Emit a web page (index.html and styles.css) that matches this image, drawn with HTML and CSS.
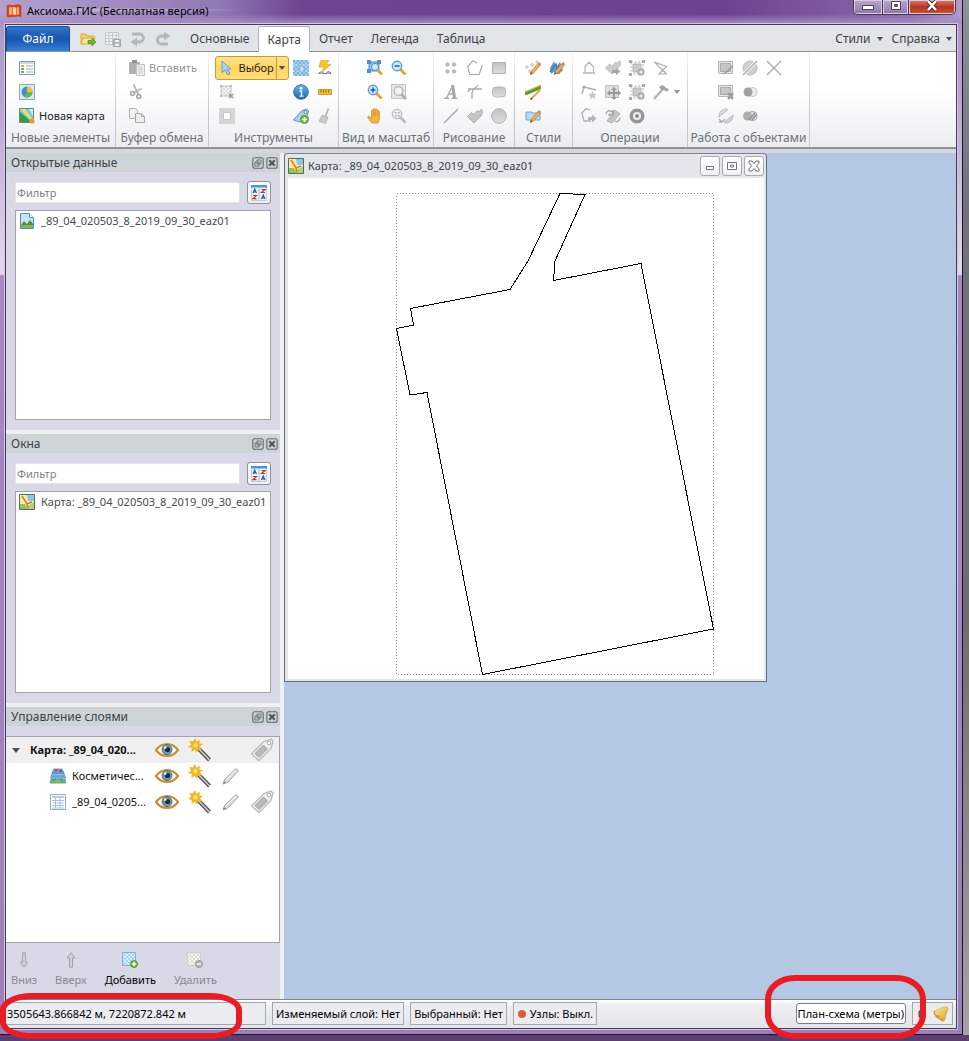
FILE: index.html
```html
<!DOCTYPE html>
<html lang="ru">
<head>
<meta charset="utf-8">
<meta name="viewport" content="width=device-width, initial-scale=1">
<title>Аксиома.ГИС (Бесплатная версия)</title>
<link rel="stylesheet" href="styles.css">
</head>
<body>
<svg class="sprite" aria-hidden="true">
  <defs>
    <linearGradient id="gGrey" x1="0" y1="0" x2="0" y2="1"><stop offset="0" stop-color="#c2c2c2"/><stop offset="1" stop-color="#dedede"/></linearGradient>
    <linearGradient id="gBlue" x1="0" y1="0" x2="0" y2="1"><stop offset="0" stop-color="#6fb4ea"/><stop offset="1" stop-color="#1c62b4"/></linearGradient>
    <linearGradient id="gGold" x1="0" y1="0" x2="1" y2="1"><stop offset="0" stop-color="#fff0a8"/><stop offset="1" stop-color="#d99a1c"/></linearGradient>
    <pattern id="pCheck" width="4" height="4" patternUnits="userSpaceOnUse"><rect width="4" height="4" fill="#d6efff"/><path d="M0 0h2v2H0zM2 2h2v2H2z" fill="#a4d4f4"/></pattern>
    <pattern id="pCheckGrey" width="4" height="4" patternUnits="userSpaceOnUse"><rect width="4" height="4" fill="#f4f4f4"/><path d="M0 0h2v2H0zM2 2h2v2H2z" fill="#dcdcdc"/></pattern>
    <pattern id="pSel" width="4" height="4" patternUnits="userSpaceOnUse"><rect width="4" height="4" fill="#a9d0ee"/><path d="M0 0h2v2H0zM2 2h2v2H2z" fill="#7db2dc"/></pattern>
  </defs>
  <symbol id="app" viewBox="0 0 16 16"><path d="M1 2.500c3-1.500 4 .5 7 0s4-1.500 7 0v11c-3-1.500-4 .5-7 0s-4 1.500-7 0z" fill="#d9481f" stroke="#b83a17" stroke-width=".6"/><path d="M3 4.500l3-.5v7.500l-3 .5zM6.500 4l3.500.5V12l-3.500-.5zM10.500 4.500L13 4v7.500l-2.500.5z" fill="#f3a676"/><path d="M7 4.500l3 .4v6.500l-3-.4z" fill="#fbd3b0"/></symbol>
  <symbol id="open" viewBox="0 0 16 16"><path d="M1 13V3h5l1 2h7v3" fill="#f5d372" stroke="#d9a93c"/><path d="M1 13l2-6h12l-2 6z" fill="#fbe59a" stroke="#d9a93c"/><path d="M8 9.500h4V7l4 4-4 4v-2.500H8z" fill="#6cb52d" stroke="#4d8f1b" stroke-width=".7"/></symbol>
  <symbol id="saveTable" viewBox="0 0 16 16"><path d="M.5 1.500h13v12H.5zM.5 4.500h13M.5 7.500h13M.5 10.500h13M4 1.500v12M7.500 1.500v12M11 1.500v12" fill="#f3f3f3" stroke="#c6c6c6"/><path d="M8.500 8.500h7v7h-7z" fill="#b7b9bb" stroke="#a5a5a5"/><path d="M10 9h4v2h-4zM10 13h4v2h-4z" fill="#f1f1f1"/></symbol>
  <symbol id="undo" viewBox="0 0 16 16"><path d="M2 3h7.500a4 4 0 0 1 0 8H5" fill="none" stroke="#b4b6b8" stroke-width="2.800"/><path d="M7 6.500v9L.5 11z" fill="#b4b6b8"/></symbol>
  <symbol id="redo" viewBox="0 0 16 16"><path d="M11 5H6.500a4 4 0 0 0 0 8H13" fill="none" stroke="#b4b6b8" stroke-width="2.800"/><path d="M9 .5v9L15.500 5z" fill="#b4b6b8"/></symbol>
  <symbol id="legend" viewBox="0 0 16 16"><path d="M.5 1.500h15v13H.5z" fill="#fff" stroke="#7f9bb5"/><path d="M1 2h14v2H1z" fill="#c4d9ea"/><path d="M2 5h3v2H2z" fill="#e9a53a"/><path d="M2 8h3v2H2z" fill="#5f9fd6"/><path d="M2 11h3v2H2z" fill="#73b04a"/><path d="M7 6h7M7 9h7M7 12h7" stroke="#9aa9b6"/></symbol>
  <symbol id="pie" viewBox="0 0 16 16"><path d="M.5.500h15v15H.5z" fill="#dfe8f0" stroke="#8fa6b8"/><circle cx="8" cy="8" r="5.500" fill="#3f8fd2"/><path d="M8 8V2.500A5.500 5.500 0 0 1 13.500 8z" fill="#f0c23c"/><path d="M8 8h5.500a5.500 5.500 0 0 1-8 5z" fill="#70b548"/></symbol>
  <symbol id="newmap" viewBox="0 0 16 16"><path d="M.5.500h14v14H.5z" fill="#7cc7ea" stroke="#5a8a8a"/><path d="M1 4l12 10H1z" fill="#36a041"/><path d="M1 1h5L14 12v2z" fill="#f3e05a"/><path d="M10 1h4v7z" fill="#d6edf7"/><circle cx="13" cy="13" r="2.600" fill="#f19a2c"/></symbol>
  <symbol id="map" viewBox="0 0 16 16"><path d="M.5.500h15v15H.5z" fill="#f6efaa" stroke="#586a58"/><path d="M8 1h7v6H9z" fill="#8ec4ea"/><path d="M1 10h5l3 5H1z" fill="#8fc45c"/><path d="M9 12l6-4v7H9z" fill="#a8d678"/><path d="M3 2l5 8 5-2M8 10l1 4" fill="none" stroke="#dd7a2c" stroke-width="1.500"/></symbol>
  <symbol id="paste" viewBox="0 0 16 16"><path d="M0 2h11v12H0z" fill="#b1b1b1"/><path d="M3 0h5v3H3z" fill="#8f8f8f"/><path d="M7.500 4.500h8v11h-8z" fill="#f0f0f0" stroke="#c2c2c2"/><path d="M9 6h5v8H9z" fill="#dcdcdc"/></symbol>
  <symbol id="cut" viewBox="0 0 16 16"><path d="M4.500.500l5 10M12.500 4.500L5 9" stroke="#b5b5b5" stroke-width="1.700"/><circle cx="9.700" cy="12.500" r="2" fill="none" stroke="#a2a2a2" stroke-width="1.500"/><circle cx="3.500" cy="9.500" r="2" fill="none" stroke="#a2a2a2" stroke-width="1.500"/></symbol>
  <symbol id="copy" viewBox="0 0 16 16"><path d="M.5.500h6l2 2v8h-8z" fill="#f0f0f0" stroke="#b2b2b2"/><path d="M6.500 5.500h6l3 3v6h-9z" fill="#ececec" stroke="#aaa"/><path d="M12.500 5.500v3h3" fill="none" stroke="#aaa"/></symbol>
  <symbol id="cursor" viewBox="0 0 16 16"><path d="M3 1l9 8H8.500l2.500 5-2.500 1-2-5L3 12.500z" fill="#a9d4f3" stroke="#6f9dbd"/></symbol>
  <symbol id="selRect" viewBox="0 0 16 16"><path d="M2 2h10v10H2z" fill="url(#pCheckGrey)" stroke="#c0c0c0"/><path d="M1 1h2v2H1zM11 1h2v2h-2zM1 11h2v2H1z" fill="#bbb"/><path d="M10 10l4 4M14 10l-4 4" stroke="#999" stroke-width="1.600"/></symbol>
  <symbol id="selFrame" viewBox="0 0 16 16"><path d="M2 2h12v12H2z" fill="#fff" stroke="#d5d5d5" stroke-width="4"/><path d="M4.500 4.500h7v7h-7z" fill="#fff" stroke="#c4c4c4"/></symbol>
  <symbol id="selAll" viewBox="0 0 16 16"><path d="M0 0h16v16H0z" fill="url(#pSel)"/><path d="M0 5h16M0 11h16" stroke="#c7e0f3" stroke-width="1" stroke-dasharray="2 1"/><path d="M7 5l5 4-2 1 1 3-2 0-1-2-1 1z" fill="#cfe6f8" stroke="#7ba6c8" stroke-width=".7"/></symbol>
  <symbol id="flash" viewBox="0 0 16 16"><path d="M4 0h8L9.500 4.500H14L5 12l2-5H2z" fill="#f7c23c" stroke="#e2a321" stroke-width=".7"/><path d="M1.500 14c0-3 4-3.500 5.500-1h2c1-2.500 5-2.500 5.500 1z" fill="#777"/><path d="M3 13h3M10 13h3" stroke="#ddd"/></symbol>
  <symbol id="info" viewBox="0 0 16 16"><circle cx="8" cy="8" r="7.300" fill="url(#gBlue)" stroke="#3673b2"/><circle cx="8" cy="4.300" r="1.300" fill="#fff"/><path d="M6.500 7H8.500v5M6.500 12.200h4" stroke="#fff" stroke-width="1.300" fill="none"/></symbol>
  <symbol id="ruler" viewBox="0 0 16 16"><path d="M1.500 5.500h13v5h-13z" fill="#f2ba3c" stroke="#d59a27"/><path d="M4 6v2.500M6.500 6v2.500M9 6v2.500M11.500 6v2.500" stroke="#9b6b12"/></symbol>
  <symbol id="tagAdd" viewBox="0 0 16 16"><path d="M.5 12L8.500 3l5-2 2 2-1.500 5-7 6z" fill="#a7d1f1" stroke="#5a93c2"/><circle cx="12.500" cy="4" r="1.500" fill="#fff" stroke="#777"/><circle cx="11.500" cy="11.500" r="4" fill="#6fb92d" stroke="#4e921b" stroke-width=".8"/><path d="M11.500 9v5M9 11.500h5" stroke="#fff" stroke-width="1.600"/></symbol>
  <symbol id="brush" viewBox="0 0 16 16"><path d="M11.500.500L8.500 8" stroke="#b9b9b9" stroke-width="2"/><path d="M5 7l6 2-2 6.500-7-2z" fill="#c9c9c9" stroke="#b0b0b0" stroke-width=".7"/></symbol>
  <symbol id="zoomSel" viewBox="0 0 16 16"><path d="M2 2h10v9H2z" fill="#8ec3ea" stroke="#4a90c8"/><path d="M0 0h4v4H0zM10 0h4v4h-4zM0 9h4v4H0z" fill="#4f92cb"/><circle cx="8" cy="7" r="3.600" fill="#c9e9fb" stroke="#4d93c8"/><path d="M10.500 10l4.500 4.500" stroke="#e7a136" stroke-width="2.800"/></symbol>
  <symbol id="zoomOut" viewBox="0 0 16 16"><path d="M9 9l5.500 5.500" stroke="#e7a136" stroke-width="2.800"/><circle cx="6" cy="6" r="4.700" fill="#c9e9fb" stroke="#5a9fd0" stroke-width="1.400"/><path d="M3.500 6h5" stroke="#225f94" stroke-width="1.500"/></symbol>
  <symbol id="zoomIn" viewBox="0 0 16 16"><path d="M9 9l5.500 5.500" stroke="#e7a136" stroke-width="2.800"/><circle cx="6" cy="6" r="4.700" fill="#c9e9fb" stroke="#5a9fd0" stroke-width="1.400"/><path d="M3.500 6h5M6 3.500v5" stroke="#225f94" stroke-width="1.500"/></symbol>
  <symbol id="zoomWin" viewBox="0 0 16 16"><path d="M.5.500h14v14H.5z" fill="#e6e6e6" stroke="#c3c3c3"/><path d="M10 10l5 5" stroke="#b0b0b0" stroke-width="2.500"/><circle cx="7.500" cy="7" r="4.300" fill="#f2f2f2" stroke="#b2b2b2" stroke-width="1.200"/></symbol>
  <symbol id="hand" viewBox="0 0 16 16"><path d="M5 15l-4-5c-1-2 1-2 2-1l1.500 1.500V3c0-1.500 1.800-1.500 1.800 0V1.500C6.500 0 8.300 0 8.400 1.500V2c.2-1.500 2-1.300 2 .2v1.300c.3-1.300 2-1 2 .3V11l-1.400 4z" fill="#f3b444" stroke="#d08f2a" stroke-width=".8"/><path d="M6.300 3v5M8.400 2.500V8M10.400 3v5" stroke="#d08f2a" stroke-width=".7"/></symbol>
  <symbol id="zoomMove" viewBox="0 0 16 16"><path d="M9 9l5.500 5.500" stroke="#b9b9b9" stroke-width="2.500"/><circle cx="6" cy="6" r="4.700" fill="#eee" stroke="#bbb" stroke-width="1.300"/><path d="M4 4h1.500v1.500H4zM7 4h1.500v1.500H7zM4 7h1.500v1.500H4zM7 7h1.500v1.500H7z" fill="#aaa"/></symbol>
  <symbol id="points" viewBox="0 0 16 16"><g fill="#bdbdbd" stroke="#a5a5a5" stroke-width=".6"><circle cx="4.500" cy="4.500" r="1.800"/><circle cx="11" cy="4.500" r="1.800"/><circle cx="4.500" cy="11.500" r="1.800"/><circle cx="11" cy="11.500" r="1.800"/></g></symbol>
  <symbol id="polyline" viewBox="0 0 16 16"><path d="M10 3L6 .7.700 6.500l2 8h9.500L15.300 5" fill="none" stroke="#a9a9a9" stroke-width="1.200"/></symbol>
  <symbol id="rect" viewBox="0 0 16 16"><path d="M1.500 2.500h13v11h-13z" fill="url(#gGrey)" stroke="#b1b1b1"/></symbol>
  <symbol id="letterA" viewBox="0 0 16 16"><path d="M1 14.300h5M8.500 14.300H14.500M3.500 14L9.500 2M6 10h5" fill="none" stroke="#aaa" stroke-width="1.500"/><path d="M9.700 1l1.800 13" stroke="#a5a5a5" stroke-width="2.900"/></symbol>
  <symbol id="arc" viewBox="0 0 16 16"><path d="M1 5h14M5 15V9c0-4 4-5 6-8M3 5l-2 3" fill="none" stroke="#a9a9a9" stroke-width="1.300"/></symbol>
  <symbol id="rrect" viewBox="0 0 16 16"><rect x="1.500" y="3" width="13" height="10" rx="3.500" fill="url(#gGrey)" stroke="#b9b9b9"/></symbol>
  <symbol id="line" viewBox="0 0 16 16"><path d="M1 15L15 1" stroke="#a7a7a7" stroke-width="1.400"/></symbol>
  <symbol id="poly" viewBox="0 0 16 16"><path d="M.5 8.500l4-4 2.500 2 3.500-4 1.500 1.500 2.500-3 1 3.500-1.500 3.500-7 7z" fill="#c6c6c6" stroke="#b0b0b0"/></symbol>
  <symbol id="circle" viewBox="0 0 16 16"><circle cx="8" cy="8" r="7.300" fill="url(#gGrey)" stroke="#b1b1b1"/></symbol>
  <symbol id="pencilTip" viewBox="0 0 16 16"><path d="M5.500 14l1-3 7-8 2 2-7 8z" fill="#f2b04c" stroke="#c17d28" stroke-width=".8"/><path d="M12.500 4l1.500-2 2 2-1.500 1.500z" fill="#d6786a"/><path d="M5 15l1-3 1.600 1.600z" fill="#7b4a17"/></symbol>
  <symbol id="stPoint" viewBox="0 0 16 16"><g fill="#d3d7da" stroke="#babec2" stroke-width=".5"><circle cx="2" cy="7" r="1.500"/><circle cx="5" cy="11" r="1.500"/><circle cx="7" cy="5" r="1.500"/><circle cx="12" cy="2" r="1.300"/></g><use href="#pencilTip"/></symbol>
  <symbol id="stText" viewBox="0 0 16 16"><path d="M1 8l4-7 2 6 4-5 3 8-4 4-5-2-3 2z" fill="#5a9ad0"/><path d="M1 12l6-8 2 10" fill="none" stroke="#4780b4" stroke-width="1.500"/><use href="#pencilTip"/></symbol>
  <symbol id="stLine" viewBox="0 0 16 16"><path d="M0 10L16 3" stroke="#5b9a3c" stroke-width="3.500"/><path d="M0 8L16 1" stroke="#d8b93b" stroke-width="1.200"/><path d="M6 15l9-9" stroke="#e8a848" stroke-width="2"/><path d="M5.500 15.500l1.500-1.500" stroke="#7b4a17" stroke-width="1.500"/></symbol>
  <symbol id="stFill" viewBox="0 0 16 16"><path d="M1 4h6v1h8v7H1z" fill="#b7dcf4" stroke="#6ba2cc"/><use href="#pencilTip"/></symbol>
  <symbol id="opHouse" viewBox="0 0 16 16"><path d="M2 13h3M11 13h3M4 13V7l4-5 4.500 5v6H5" fill="none" stroke="#b7b7b7" stroke-width="1.300"/></symbol>
  <symbol id="opNode" viewBox="0 0 16 16"><path d="M1 10l2-7 12 3" fill="none" stroke="#b2b2b2" stroke-width="1.500"/><circle cx="3" cy="3" r="1.600" fill="#aaa"/><path d="M11.500 7l1.200 2.700 3 .3-2.200 2 .6 3-2.600-1.500L8.800 15l.6-3-2.200-2 3-.3z" fill="#c4c4c4"/></symbol>
  <symbol id="opOpen" viewBox="0 0 16 16"><path d="M9 2L5 .8.800 5 3 13h7" fill="none" stroke="#b0b0b0" stroke-width="1.300"/><path d="M7 9h4V6.500l4.500 4-4.500 4V12H7z" fill="#b4b4b4"/></symbol>
  <symbol id="opPoly" viewBox="0 0 16 16"><path d="M.5 8l4-4 2.500 2 3.500-4 1.500 1.500L14.500.5l1 3.500-1.500 3-7 7z" fill="#cdcdcd" stroke="#bbb"/><path d="M7 10h4V8l4.500 3.500L11 15v-2H7z" fill="#a5a5a5"/></symbol>
  <symbol id="opMove" viewBox="0 0 16 16"><path d="M.5 1.500h13v12H.5z" fill="#dedede" stroke="#c2c2c2"/><path d="M9 3l3 3h-2v2h3V6l3 3-3 3v-2h-3v3h2l-3 3-3-3h2v-3H5v2L2 9l3-3v2h3V6H6z" fill="#999"/></symbol>
  <symbol id="opTurn" viewBox="0 0 16 16"><path d="M2 13L10 2l5 4-8 9z" fill="#c5c5c5" stroke="#b2b2b2"/><path d="M1 6c1-4 4-4 6-2L8 2v5H4l1.500-1.500M15 10c-1 4-4 4-5 3" fill="none" stroke="#a6a6a6" stroke-width="1.400"/></symbol>
  <symbol id="opGroup" viewBox="0 0 16 16"><path d="M2 2h12v12H2z" fill="none" stroke="#b5b5b5" stroke-dasharray="2 1.500"/><path d="M4 4h8v8H4z" fill="#c9c9c9" stroke="#b1b1b1"/><path d="M0 0h3v3H0zM13 0h3v3h-3zM0 13h3v3H0z" fill="#aaa"/><circle cx="12" cy="12" r="3.500" fill="#a8a8a8"/><path d="M10 12h4M12 10v4" stroke="#fff"/></symbol>
  <symbol id="ring" viewBox="0 0 16 16"><circle cx="8" cy="8" r="5.800" fill="#e9e9e9" stroke="#969696" stroke-width="3.400"/><circle cx="8" cy="8" r="1.800" fill="#777"/></symbol>
  <symbol id="opCross" viewBox="0 0 16 16"><path d="M13.500 14L1.500 2l12 4.500L6 14h8" fill="none" stroke="#b0b0b0" stroke-width="1.200"/><circle cx="9.500" cy="10.500" r="1.500" fill="#bbb"/></symbol>
  <symbol id="hammer" viewBox="0 0 16 16"><path d="M1 15l8-9" stroke="#b2b2b2" stroke-width="2.300"/><path d="M6 3c3-3 5-2 7 1l3 1-2 3-3-2-2 1z" fill="#a5a5a5"/></symbol>
  <symbol id="wEdit" viewBox="0 0 16 16"><path d="M.5 1.500h14v12H.5z" fill="#e8e8e8" stroke="#b5b5b5"/><path d="M2.500 3.500h10v8h-10z" fill="#c6c6c6" stroke="#aaa"/><path d="M6 14L15 6" stroke="#999" stroke-width="1.500"/></symbol>
  <symbol id="wDel" viewBox="0 0 16 16"><path d="M.5 1.500h14v11H.5z" fill="#e8e8e8" stroke="#b5b5b5"/><path d="M2.500 3.500h10v7h-10z" fill="#c6c6c6" stroke="#aaa"/><path d="M10 9l5 6M15 9l-5 6" stroke="#999" stroke-width="2.200"/></symbol>
  <symbol id="wSlice" viewBox="0 0 16 16"><circle cx="8" cy="8" r="7" fill="#cfcfcf" stroke="#bcbcbc"/><path d="M0 16L16 0" stroke="#fff" stroke-width="3"/><path d="M1 15L15 1" stroke="#a5a5a5" stroke-width="1.300"/></symbol>
  <symbol id="wHalf" viewBox="0 0 16 16"><path d="M1 9a7 7 0 0 1 9-7.500z" fill="#dadada" stroke="#bbb"/><path d="M15 7a7 7 0 0 1-9 7.500z" fill="#d4d4d4" stroke="#bbb"/><path d="M1 11l3 3 3-3M4 14H1" fill="none" stroke="#aaa" stroke-width="1.300"/></symbol>
  <symbol id="wX" viewBox="0 0 16 16"><path d="M1 1l14 14M15 1L1 15" stroke="#aaa" stroke-width="1.400"/></symbol>
  <symbol id="wUnion" viewBox="0 0 16 16"><rect x="6" y="3.500" width="9" height="9" rx="4" fill="#ececec" stroke="#c6c6c6"/><circle cx="6" cy="8" r="4.500" fill="#a2a2a2"/></symbol>
  <symbol id="wHatch" viewBox="0 0 16 16"><rect x="6" y="3.500" width="9" height="9" rx="4" fill="#ddd" stroke="#aaa"/><circle cx="5.500" cy="8" r="4.500" fill="#acacac"/><path d="M7 12l6-7M9.500 12.500l5-6" stroke="#8e8e8e" stroke-width="1.200"/></symbol>
  <symbol id="float" viewBox="0 0 12 12"><rect x=".8" y=".8" width="10.400" height="10.400" rx="2" fill="none" stroke="#606970" stroke-width="1.100"/><path d="M5 3h4v4H5zM3 5h4v4H3z" fill="#cdd3d7" stroke="#606970" stroke-width=".9"/></symbol>
  <symbol id="close" viewBox="0 0 12 12"><rect x=".8" y=".8" width="10.400" height="10.400" rx="2" fill="none" stroke="#606970" stroke-width="1.100"/><path d="M3.200 3.200l5.600 5.600M8.800 3.200L3.200 8.800" stroke="#4c555c" stroke-width="2"/></symbol>
  <symbol id="sort" viewBox="0 0 16 16"><path d="M.5.500h15v15H.5z" fill="#edf2f8" stroke="#c3cedb"/><path d="M0 0h16v2.500H0z" fill="#3c9bd8"/><path d="M8 2v14" stroke="#aab6c4"/><path d="M2 8l1.700-4L5.500 8M2.500 6.800H5M10.500 14l1.700-4 1.800 4M11 12.800h2.500" fill="none" stroke="#2e5f9e" stroke-width="1.200"/><path d="M10.500 4.500H14l-3.500 3H14M2 10.500h3.500L2 13.700h3.500" fill="none" stroke="#b5392e" stroke-width="1.200"/></symbol>
  <symbol id="file" viewBox="0 0 16 16"><path d="M1.500.500h9l4 4v11h-13z" fill="#c8e5f8" stroke="#4d91c6"/><path d="M10.500.500v4h4" fill="#fff" stroke="#4d91c6"/><path d="M2 15v-3l3-4 3 3 3-4 3 4v4z" fill="#5f8a36"/><path d="M2 12h12v3H2z" fill="#8fb04a"/></symbol>
  <symbol id="layers" viewBox="0 0 16 16"><path d="M4 1h8l2 4H2z" fill="#6db6ea" stroke="#3577b5" stroke-width=".7"/><path d="M4.500 1.500h3v2h-3zM9 2h3v2H9z" fill="#d53f3c"/><path d="M2 5.500h12l1.500 4.500H.5z" fill="#90caed" stroke="#3577b5" stroke-width=".7"/><path d="M1 11h14l.7 4H.3z" fill="#89c34a" stroke="#3577b5" stroke-width=".7"/><path d="M2 8h12M3 13l3-2M10 11l3 3" stroke="#3b86c9" stroke-width="1.200"/></symbol>
  <symbol id="table" viewBox="0 0 16 16"><path d="M.5.500h15v15H.5z" fill="#fff" stroke="#8caed2"/><path d="M2 2h12v2H2z" fill="#b1cdea"/><path d="M2 6.500h12M2 9h12M2 11.500h12M2 14h12M5.500 4v10M10 4v10" stroke="#a5c1df"/></symbol>
  <symbol id="eye" viewBox="0 0 24 16"><path d="M1 8C7 0 17 0 23 8 17 16 7 16 1 8z" fill="#fff" stroke="#c98d35" stroke-width="2.200"/><circle cx="12" cy="7.600" r="5" fill="#6d99ae" stroke="#4d7183"/><circle cx="12.500" cy="7.500" r="2.600" fill="#1d2b35"/><circle cx="10.300" cy="5.600" r="1.300" fill="#e4f2f8"/></symbol>
  <symbol id="wand" viewBox="0 0 24 24"><path d="M9 9l12.500 13" stroke="#505050" stroke-width="4"/><path d="M9 9l12.500 13" stroke="#c9c9c9" stroke-width="1.800"/><path d="M7 0l1.500 3.700L12 1.500l-.7 4 3.900.5-3.300 2.300 2.300 3.300-4-.4L9 15l-2.300-3.200L3.500 14l.3-4L0 9l3.200-2.500L1 3l4 .5z" fill="#f4b429"/><circle cx="7.500" cy="7.300" r="2.200" fill="#fbdd73"/></symbol>
  <symbol id="pencil" viewBox="0 0 18 18"><path d="M1 17l2-5L14 1.500 16.500 4 6 15z" fill="#dcdcdc" stroke="#a8a8a8"/><path d="M4 13L14 3" stroke="#f7f7f7"/><path d="M1 17l1-3 2 2z" fill="#888"/></symbol>
  <symbol id="tag" viewBox="0 0 24 24"><path d="M1.500 16L14 3.500l7-2.500 2 2-2 7.500L9 22.500z" fill="#f2f2f2" stroke="#bcbcbc" stroke-width="1.400"/><path d="M5 15.500L13.500 7l4 4-8.500 8.500z" fill="#b9b9b9" stroke="#a1a1a1"/><circle cx="19" cy="5" r="1.800" fill="#fff" stroke="#aaa"/></symbol>
  <symbol id="down" viewBox="0 0 16 16"><path d="M6.500.800h3V10h2.300L8 15.200 4.200 10h2.300z" fill="#d1d1d6" stroke="#a2a2a8"/></symbol>
  <symbol id="up" viewBox="0 0 16 16"><path d="M6.500 15.200h3V6h2.300L8 .8 4.200 6h2.300z" fill="#d1d1d6" stroke="#a2a2a8"/></symbol>
  <symbol id="add" viewBox="0 0 16 16"><path d="M.5.500h13v13H.5z" fill="url(#pCheck)" stroke="#71b5e0"/><circle cx="12" cy="12" r="3.500" fill="#76b82e" stroke="#4c8a1a" stroke-width=".8"/><path d="M9.800 12h4.400M12 9.800v4.400" stroke="#fff" stroke-width="1.400"/></symbol>
  <symbol id="remove" viewBox="0 0 16 16"><path d="M.5.500h13v13H.5z" fill="url(#pCheckGrey)" stroke="#cfcfcf"/><circle cx="12" cy="12" r="3.500" fill="#b3b3b3" stroke="#929292" stroke-width=".8"/><path d="M9.800 12h4.400" stroke="#fff" stroke-width="1.400"/></symbol>
  <symbol id="bell" viewBox="0 0 16 16"><path d="M1 5c4 0 6-4 12-4 3 0 2 3 1 5-2 3-1 6-3 9-2 1-4-1-5-3C3 11 1 8 1 5z" fill="url(#gGold)" stroke="#d8a93c" stroke-width=".7"/><path d="M1 5c0 4 4 8 9 9" stroke="#c2942b" stroke-width="1.200" fill="none"/><ellipse cx="4.500" cy="10.500" rx="1.800" ry="1.400" fill="#c8922a"/></symbol>
</svg>

<div class="desktop">
<div class="window">
  <header class="titlebar">
    <svg class="icon"><use href="#app"/></svg>
    <h1 class="title">Аксиома.ГИС (Бесплатная версия)</h1>
    <div class="caption-buttons">
      <button class="cap cap-min" aria-label="Свернуть"><svg class="cap-glyph" viewBox="0 0 12 12"><path d="M.5 5.500h11v4H.5z" fill="#fff" stroke="#50405c"/></svg></button>
      <button class="cap cap-max" aria-label="Развернуть"><svg class="cap-glyph" viewBox="0 0 12 12"><path d="M1.500 1.500h9v8h-9z" fill="#fff" stroke="#50405c"/><path d="M4.500 4.500h3v2h-3z" fill="#8b75a0" stroke="#50405c"/></svg></button>
      <button class="cap cap-close" aria-label="Закрыть"><svg class="cap-glyph" viewBox="0 0 12 12"><path d="M2 1l8 9M10 1L2 10" stroke="#5d2a2a" stroke-width="4.200"/><path d="M2 1l8 9M10 1L2 10" stroke="#fff" stroke-width="2.500"/></svg></button>
    </div>
  </header>

  <div class="client">
    <nav class="tabs">
      <button class="file-tab">Файл</button>
      <div class="quick">
        <button class="tool" aria-label="Открыть"><svg class="icon"><use href="#open"/></svg></button>
        <button class="tool" aria-label="Сохранить таблицу"><svg class="icon"><use href="#saveTable"/></svg></button>
        <button class="tool" aria-label="Отменить"><svg class="icon"><use href="#undo"/></svg></button>
        <button class="tool" aria-label="Повторить"><svg class="icon"><use href="#redo"/></svg></button>
      </div>
      <button class="tab">Основные</button>
      <button class="tab tab-active">Карта</button>
      <button class="tab">Отчет</button>
      <button class="tab">Легенда</button>
      <button class="tab">Таблица</button>
      <div class="tab-menus">
        <button class="menu">Стили<span class="caret"></span></button>
        <button class="menu">Справка<span class="caret"></span></button>
      </div>
    </nav>

    <div class="ribbon">
      <section class="group g-new">
        <div class="tools cols-1">
          <button class="tool" aria-label="Легенда"><svg class="icon"><use href="#legend"/></svg></button>
          <button class="tool" aria-label="Диаграмма"><svg class="icon"><use href="#pie"/></svg></button>
          <button class="tool text-tool"><svg class="icon"><use href="#newmap"/></svg>Новая карта</button>
        </div>
        <h2 class="group-name">Новые элементы</h2>
      </section>
      <section class="group g-clip">
        <div class="tools cols-1">
          <button class="tool text-tool muted"><svg class="icon"><use href="#paste"/></svg>Вставить</button>
          <button class="tool" aria-label="Вырезать"><svg class="icon"><use href="#cut"/></svg></button>
          <button class="tool" aria-label="Копировать"><svg class="icon"><use href="#copy"/></svg></button>
        </div>
        <h2 class="group-name">Буфер обмена</h2>
      </section>
      <section class="group g-tools">
        <div class="tools cols-select">
          <div class="split">
            <button class="split-main"><svg class="icon"><use href="#cursor"/></svg>Выбор</button>
            <button class="split-drop" aria-label="Режим выбора"><span class="caret"></span></button>
          </div>
          <button class="tool" aria-label="Выбрать все"><svg class="icon"><use href="#selAll"/></svg></button>
          <button class="tool" aria-label="Горячая ссылка"><svg class="icon"><use href="#flash"/></svg></button>
          <button class="tool" aria-label="Снять выделение"><svg class="icon"><use href="#selRect"/></svg></button>
          <button class="tool" aria-label="Информация"><svg class="icon"><use href="#info"/></svg></button>
          <button class="tool" aria-label="Линейка"><svg class="icon"><use href="#ruler"/></svg></button>
          <button class="tool" aria-label="Инвертировать"><svg class="icon"><use href="#selFrame"/></svg></button>
          <button class="tool" aria-label="Подпись"><svg class="icon"><use href="#tagAdd"/></svg></button>
          <button class="tool" aria-label="Очистить"><svg class="icon"><use href="#brush"/></svg></button>
        </div>
        <h2 class="group-name">Инструменты</h2>
      </section>
      <section class="group g-view">
        <div class="tools cols-2">
          <button class="tool" aria-label="Показать выбранное"><svg class="icon"><use href="#zoomSel"/></svg></button>
          <button class="tool" aria-label="Уменьшить"><svg class="icon"><use href="#zoomOut"/></svg></button>
          <button class="tool" aria-label="Увеличить"><svg class="icon"><use href="#zoomIn"/></svg></button>
          <button class="tool" aria-label="Показать слой"><svg class="icon"><use href="#zoomWin"/></svg></button>
          <button class="tool" aria-label="Сдвиг"><svg class="icon"><use href="#hand"/></svg></button>
          <button class="tool" aria-label="Показать всё"><svg class="icon"><use href="#zoomMove"/></svg></button>
        </div>
        <h2 class="group-name">Вид и масштаб</h2>
      </section>
      <section class="group g-draw">
        <div class="tools cols-3">
          <button class="tool" aria-label="Точки"><svg class="icon"><use href="#points"/></svg></button>
          <button class="tool" aria-label="Полилиния"><svg class="icon"><use href="#polyline"/></svg></button>
          <button class="tool" aria-label="Прямоугольник"><svg class="icon"><use href="#rect"/></svg></button>
          <button class="tool" aria-label="Текст"><svg class="icon"><use href="#letterA"/></svg></button>
          <button class="tool" aria-label="Дуга"><svg class="icon"><use href="#arc"/></svg></button>
          <button class="tool" aria-label="Скругленный прямоугольник"><svg class="icon"><use href="#rrect"/></svg></button>
          <button class="tool" aria-label="Линия"><svg class="icon"><use href="#line"/></svg></button>
          <button class="tool" aria-label="Полигон"><svg class="icon"><use href="#poly"/></svg></button>
          <button class="tool" aria-label="Эллипс"><svg class="icon"><use href="#circle"/></svg></button>
        </div>
        <h2 class="group-name">Рисование</h2>
      </section>
      <section class="group g-styles">
        <div class="tools cols-2">
          <button class="tool" aria-label="Стиль точки"><svg class="icon"><use href="#stPoint"/></svg></button>
          <button class="tool" aria-label="Стиль текста"><svg class="icon"><use href="#stText"/></svg></button>
          <button class="tool row-start" aria-label="Стиль линии"><svg class="icon"><use href="#stLine"/></svg></button>
          <button class="tool row-start" aria-label="Стиль полигона"><svg class="icon"><use href="#stFill"/></svg></button>
        </div>
        <h2 class="group-name">Стили</h2>
      </section>
      <section class="group g-ops">
        <div class="tools cols-4">
          <button class="tool" aria-label="Форма"><svg class="icon"><use href="#opHouse"/></svg></button>
          <button class="tool" aria-label="В полигон"><svg class="icon"><use href="#opPoly"/></svg></button>
          <button class="tool" aria-label="Объединить"><svg class="icon"><use href="#opGroup"/></svg></button>
          <button class="tool" aria-label="Пересечения"><svg class="icon"><use href="#opCross"/></svg></button>
          <button class="tool" aria-label="Добавить узел"><svg class="icon"><use href="#opNode"/></svg></button>
          <button class="tool" aria-label="Переместить"><svg class="icon"><use href="#opMove"/></svg></button>
          <button class="tool" aria-label="Разделить"><svg class="icon"><use href="#opGroup"/></svg></button>
          <button class="tool with-caret" aria-label="Обработка"><svg class="icon"><use href="#hammer"/></svg><span class="caret"></span></button>
          <button class="tool" aria-label="В полилинию"><svg class="icon"><use href="#opOpen"/></svg></button>
          <button class="tool" aria-label="Повернуть"><svg class="icon"><use href="#opTurn"/></svg></button>
          <button class="tool" aria-label="Буфер"><svg class="icon"><use href="#ring"/></svg></button>
        </div>
        <h2 class="group-name">Операции</h2>
      </section>
      <section class="group g-objects">
        <div class="tools cols-3">
          <button class="tool" aria-label="Изменить объект"><svg class="icon"><use href="#wEdit"/></svg></button>
          <button class="tool" aria-label="Разрезать"><svg class="icon"><use href="#wSlice"/></svg></button>
          <button class="tool" aria-label="Отменить"><svg class="icon"><use href="#wX"/></svg></button>
          <button class="tool row-start" aria-label="Удалить объект"><svg class="icon"><use href="#wDel"/></svg></button>
          <button class="tool" aria-label="Стереть"><svg class="icon"><use href="#wUnion"/></svg></button>
          <button class="tool row-start" aria-label="Разбить"><svg class="icon"><use href="#wHalf"/></svg></button>
          <button class="tool" aria-label="Стереть вне"><svg class="icon"><use href="#wHatch"/></svg></button>
        </div>
        <h2 class="group-name">Работа с объектами</h2>
      </section>
    </div>

    <main class="workspace">
      <aside class="docks">
        <section class="dock dock-data">
          <header class="dock-head"><h2 class="dock-title">Открытые данные</h2>
            <button class="dock-button" aria-label="Открепить"><svg class="icon-small"><use href="#float"/></svg></button>
            <button class="dock-button" aria-label="Закрыть"><svg class="icon-small"><use href="#close"/></svg></button>
          </header>
          <div class="dock-body">
            <div class="filter">
              <input class="filter-input" type="text" placeholder="Фильтр" aria-label="Фильтр данных">
              <button class="sort" aria-label="Сортировка"><svg class="icon"><use href="#sort"/></svg></button>
            </div>
            <ul class="list"><li class="list-item"><svg class="icon"><use href="#file"/></svg>_89_04_020503_8_2019_09_30_eaz01</li></ul>
          </div>
        </section>
        <section class="dock dock-windows">
          <header class="dock-head"><h2 class="dock-title">Окна</h2>
            <button class="dock-button" aria-label="Открепить"><svg class="icon-small"><use href="#float"/></svg></button>
            <button class="dock-button" aria-label="Закрыть"><svg class="icon-small"><use href="#close"/></svg></button>
          </header>
          <div class="dock-body">
            <div class="filter">
              <input class="filter-input" type="text" placeholder="Фильтр" aria-label="Фильтр окон">
              <button class="sort" aria-label="Сортировка"><svg class="icon"><use href="#sort"/></svg></button>
            </div>
            <ul class="list"><li class="list-item"><svg class="icon"><use href="#map"/></svg>Карта: _89_04_020503_8_2019_09_30_eaz01</li></ul>
          </div>
        </section>
        <section class="dock dock-layers">
          <header class="dock-head"><h2 class="dock-title">Управление слоями</h2>
            <button class="dock-button" aria-label="Открепить"><svg class="icon-small"><use href="#float"/></svg></button>
            <button class="dock-button" aria-label="Закрыть"><svg class="icon-small"><use href="#close"/></svg></button>
          </header>
          <div class="tree">
            <div class="layer layer-root">
              <span class="layer-name"><span class="caret"></span>Карта: _89_04_020...</span>
              <svg class="eye"><use href="#eye"/></svg>
              <svg class="wand"><use href="#wand"/></svg>
              <span></span>
              <svg class="wand"><use href="#tag"/></svg>
            </div>
            <div class="layer">
              <span class="layer-name layer-child"><svg class="icon"><use href="#layers"/></svg>Косметичес...</span>
              <svg class="eye"><use href="#eye"/></svg>
              <svg class="wand"><use href="#wand"/></svg>
              <svg class="pencil"><use href="#pencil"/></svg>
            </div>
            <div class="layer">
              <span class="layer-name layer-child"><svg class="icon"><use href="#table"/></svg>_89_04_0205...</span>
              <svg class="eye"><use href="#eye"/></svg>
              <svg class="wand"><use href="#wand"/></svg>
              <svg class="pencil"><use href="#pencil"/></svg>
              <svg class="wand"><use href="#tag"/></svg>
            </div>
          </div>
          <div class="layer-actions">
            <button class="action"><svg class="icon"><use href="#down"/></svg>Вниз</button>
            <button class="action"><svg class="icon"><use href="#up"/></svg>Вверх</button>
            <button class="action action-on"><svg class="icon"><use href="#add"/></svg>Добавить</button>
            <button class="action"><svg class="icon"><use href="#remove"/></svg>Удалить</button>
          </div>
        </section>
      </aside>

      <div class="mdi">
        <section class="map-window">
          <header class="map-head">
            <svg class="icon"><use href="#map"/></svg>
            <h2 class="map-title">Карта: _89_04_020503_8_2019_09_30_eaz01</h2>
            <button class="map-button" aria-label="Свернуть"><svg class="icon-small" viewBox="0 0 12 12"><path d="M2.500 6.500h7v3h-7z" fill="#fff" stroke="#6f767c"/></svg></button>
            <button class="map-button" aria-label="Развернуть"><svg class="icon-small" viewBox="0 0 12 12"><path d="M1.500 2.500h9v7h-9z" fill="#fff" stroke="#6f767c"/><path d="M4.500 5h3v2h-3z" fill="#fff" stroke="#6f767c"/></svg></button>
            <button class="map-button" aria-label="Закрыть"><svg class="icon-small" viewBox="0 0 12 12"><path d="M1 1h3l2 2.500L8 1h3v2L8.500 6 11 9v2H8L6 8.500 4 11H1V9l2.500-3L1 3z" fill="#fff" stroke="#6f767c"/></svg></button>
          </header>
          <svg class="map-canvas" viewBox="288 178 476 501" role="img" aria-label="Карта участка">
            <path class="extent" d="M396.500 193.500H713.500V674.500H396.500z"/>
            <path class="parcel" d="M560 193.500L585 194.500 555 261 553.500 280.500 641 263.500 713.500 629 482.500 674.500 427 392.500 410 395 396.500 328.500 413.500 325 410.500 308.500 510 289.500 528 261z"/>
          </svg>
        </section>
      </div>
    </main>

    <footer class="status">
      <div class="cell cell-coords">3505643.866842 м, 7220872.842 м</div>
      <div class="cell">Изменяемый слой: Нет</div>
      <div class="cell">Выбранный: Нет</div>
      <div class="cell"><span class="dot"></span>Узлы: Выкл.</div>
      <button class="projection">План-схема (метры)</button>
      <button class="cell notices">0<svg class="icon"><use href="#bell"/></svg></button>
      <span class="mark mark-coords"></span>
      <span class="mark mark-projection"></span>
    </footer>
  </div>
</div>
</div>
</body>
</html>
```
FILE: styles.css
```css
* { box-sizing: border-box; }
body {
  margin: 0;
  font: 12px/16px "Noto Sans", "Open Sans", sans-serif;
  color: #3c4248;
}
h1, h2, ul { margin: 0; padding: 0; font: inherit; list-style: none; }
button { margin: 0; padding: 0; border: 0; background: none; font: inherit; color: inherit; white-space: nowrap; }
svg { display: block; flex: none; }
.sprite { position: absolute; width: 0; height: 0; }
.icon { width: 16px; height: 16px; }
.icon-small { width: 12px; height: 12px; }
.caret { width: 0; height: 0; border: 3px solid transparent; border-top: 4px solid #4a5056; border-bottom: 0; }

.desktop {
  min-height: 100vh;
  display: flex;
  padding: 0 6px 6px 0;
  background: linear-gradient(#5c3f70, #5c3f70) left bottom / 100% 6px no-repeat, linear-gradient(#8d9298, #70747a 20%, #6d6d72 60%, #a3a3a8);
}
.window {
  flex: 1;
  min-width: 0;
  display: flex;
  flex-direction: column;
  padding: 0 5px 5px;
  border-right: 1px solid #1d1226;
  border-bottom: 1px solid #1d1226;
  background: linear-gradient(#a996cb 0, #b6a2d0 90px, #e3d9ec 274px, #a788c4 276px, #9d7fb8 100%);
}
.titlebar {
  display: flex;
  align-items: center;
  height: 24px;
  margin: 0 -5px;
  padding: 0 1px 3px 6px;
  gap: 5px;
  background:
    radial-gradient(ellipse at 110px 10px, #cfc3dfcc 0, #b7a5cfaa 90px, transparent 130px),
    linear-gradient(transparent 60%, #a78fc4 100%),
    linear-gradient(90deg, #b3a0cf 0, #9078b3 220px, #6d4691 300px, #6b4390 75%, #8c6ba9 95%, #b09ccb 100%);
}
.title { flex: 1; color: #000; font-size: 11px; }
.caption-buttons {
  display: flex;
  align-self: flex-start;
  height: 15px;
  border: 1px solid #483556;
  border-top: 0;
  border-radius: 0 0 5px 5px;
  overflow: hidden;
  margin-right: 5px;
}
.cap { display: flex; justify-content: center; height: 14px; background: linear-gradient(#bca9cf, #8d76a6); box-shadow: inset 0 0 0 1px #d9cce5; }
.cap-min { width: 28px; }
.cap-max { width: 26px; border-left: 1px solid #483556; }
.cap-close { width: 47px; border-left: 1px solid #483556; background: linear-gradient(#d8836c, #b8341d 50%, #cb5438); }
.cap-glyph { width: 12px; height: 12px; }

.client {
  flex: 1;
  display: flex;
  flex-direction: column;
  border: 1px solid #48385a;
  outline: 1px solid #d2c5e0;
  background: #f0f1f3;
}
.tabs { display: flex; align-items: stretch; height: 27px; padding-top: 1px; background: #e1e5e8; border-bottom: 1px solid #8f9499; }
.file-tab {
  width: 64px;
  color: #fff;
  border: 1px solid #1a4da0;
  border-bottom: 0;
  border-radius: 3px 3px 0 0;
  background: linear-gradient(#2f76cd, #1a54ad 50%, #3480d8);
}
.quick { display: flex; align-items: center; gap: 9px; margin: 0 10px; }
.tab { padding: 0 8px; border: 1px solid transparent; border-bottom: 0; }
.tab-active { height: 27px; background: #fff; border-color: #b2b7bc; border-radius: 3px 3px 0 0; }
.tab-menus { display: flex; gap: 9px; margin-left: auto; padding-right: 4px; }
.menu { display: flex; align-items: center; gap: 6px; }

.ribbon {
  display: flex;
  height: 97px;
  border-bottom: 2px solid #8f9398;
  background: linear-gradient(#fff 40%, #ebedf0);
}
.group {
  display: flex;
  flex-direction: column;
  align-items: center;
  padding-top: 4px;
  border-right: 1px solid;
  border-image: linear-gradient(#f4f5f6, #c4c7cc 60%) 1;
}
.g-new { width: 110px; }
.g-clip { width: 93px; }
.g-tools { width: 130px; }
.g-view { width: 95px; }
.g-draw { width: 81px; }
.g-styles { width: 58px; }
.g-ops { width: 115px; }
.g-objects { width: 122px; }
.tools { display: grid; grid-auto-rows: 24px; align-items: center; justify-items: start; column-gap: 8px; }
.cols-1 { align-self: flex-start; margin-left: 13px; }
.cols-2 { grid-template-columns: repeat(2, 16px); margin-left: 2px; }
.cols-3 { grid-template-columns: repeat(3, 16px); margin-left: 2px; }
.cols-4 { grid-template-columns: repeat(4, 16px); align-self: flex-start; margin-left: 8px; }
.cols-select { grid-template-columns: 70px 16px 16px; }
.cols-select .tool:nth-child(3n + 1) { margin-left: 4px; }
.tool { display: flex; align-items: center; color: #1e2226; }
.text-tool { gap: 4px; font-size: 11px; }
.with-caret { gap: 5px; }
.with-caret .caret { border-top-color: #8d9297; }
.muted { color: #8f9499; }
.row-start { grid-column: 1; }
.split { display: flex; width: 74px; height: 24px; border: 1px solid #c39a3c; border-radius: 3px; background: linear-gradient(#ffe38b, #ffd55e 50%, #ffde7c); color: #1e2226; }
.split-main { display: flex; flex: 1; align-items: center; gap: 4px; padding-left: 3px; font-size: 11px; }
.split-drop { width: 12px; display: grid; place-items: center; border-left: 1px solid #c39a3c; }
.group-name { margin-top: 2px; color: #6a7178; white-space: nowrap; }

.workspace { flex: 1; display: flex; padding-top: 4px; background: linear-gradient(#d4d8de 4px, #eef0f4 4px); }
.docks { width: 274px; flex: none; display: flex; flex-direction: column; gap: 4px; margin-right: 4px; }
.dock { display: flex; flex-direction: column; background: #d8d8e6; flex-basis: 0; }
.dock-data { flex-grow: 277; }
.dock-windows { flex-grow: 269; }
.dock-layers { flex-grow: 292; }
.dock-head { display: flex; align-items: center; gap: 2px; height: 19px; padding: 0 2px 0 5px; background: #cdd4d8; }
.dock-title { flex: 1; }
.dock-body { flex: 1; display: flex; flex-direction: column; gap: 6px; padding: 9px 9px 10px; }
.filter { display: flex; align-items: center; gap: 7px; }
.filter-input { flex: 1; min-width: 0; height: 21px; padding: 0 1px; border: 1px solid #e2e2ec; background: #fff; font: inherit; font-size: 11px; }
.filter-input::placeholder { color: #808080; opacity: 1; }
.sort { display: grid; place-items: center; width: 24px; height: 23px; border: 1px solid #8d919c; border-radius: 3px; background: linear-gradient(#fff, #eeeff4); }
.list { flex: 1; border: 1px solid #a2a2ae; background: #fff; }
.list-item { display: flex; align-items: center; gap: 6px; height: 20px; padding-left: 3px; white-space: nowrap; color: #454b52; font-size: 11px; }
.tree { flex: 1; margin-top: 10px; border: 1px solid #a2a2ae; border-left: 0; background: #fff; color: #111; font-size: 11px; }
.layer { display: grid; grid-template-columns: 1fr 33px 33px 29px 34px; align-items: center; justify-items: center; height: 26px; }
.layer-root { font-weight: 700; background: #efefef; }
.layer-name { justify-self: stretch; display: flex; align-items: center; gap: 10px; padding-left: 6px; white-space: nowrap; }
.layer-child { gap: 6px; padding-left: 44px; }
.layer .caret { border-width: 5px 4px 0; }
.eye { width: 24px; height: 16px; }
.wand { width: 24px; height: 24px; }
.pencil { width: 18px; height: 18px; }
.layer-actions { display: flex; gap: 18px; height: 56px; padding: 9px 5px 0; color: #88898f; font-size: 11px; }
.action { display: flex; flex-direction: column; align-items: center; gap: 4px; height: 36px; }
.action-on { color: #000; }

.mdi { flex: 1; position: relative; background: #b4c8e3; overflow: hidden; }
.map-window {
  position: absolute;
  left: 0;
  top: 0;
  width: 483px;
  height: 529px;
  display: flex;
  flex-direction: column;
  padding: 0 2px 2px 3px;
  border: 1px solid #666e7c;
  border-top-color: #7d838c;
  border-radius: 4px 4px 0 0;
  background: #e3e6ec;
}
.map-head { display: flex; align-items: center; gap: 2px; height: 24px; }
.map-title { flex: 1; margin-left: 2px; font-size: 11px; }
.map-button { display: grid; place-items: center; width: 20px; height: 20px; border: 1px solid #a5abb1; border-radius: 3px; background: linear-gradient(#fff, #f0f1f3); }
.map-canvas { flex: 1; width: 100%; min-height: 0; background: #fff; }
.extent { fill: none; stroke: #8c8c8c; stroke-dasharray: 1 2; shape-rendering: crispEdges; }
.parcel { fill: none; stroke: #000; shape-rendering: crispEdges; }

.status { position: relative; display: flex; align-items: center; gap: 6px; height: 29px; padding: 0 3px 1px 0; border-top: 1px solid #82868e; background: linear-gradient(#fff, #eceef1 6px, #e3e5e9); color: #000; font-size: 11px; }
.cell { display: flex; align-items: center; height: 23px; padding: 0 3px; border: 1px solid #a6a6b0; background: #eaecef; white-space: nowrap; }
.cell-coords { width: 260px; padding: 0 1px; border-left: 0; }
.dot { width: 8px; height: 8px; margin: 0 4px 0 1px; border-radius: 50%; background: #e2583f; }
.projection { margin-left: auto; height: 21px; padding: 0 1px; border: 1px solid #7b818b; border-radius: 3px; background: #fff; }
.notices { gap: 9px; width: 41px; padding: 0 5px; }
.mark { position: absolute; border: 6px solid #e81c24; pointer-events: none; }
.mark-coords { left: -6px; top: -7px; width: 242px; height: 46px; border-radius: 32px / 17px; }
.mark-projection { right: 30px; top: -25px; width: 161px; height: 64px; border-radius: 30px / 24px; }
```
